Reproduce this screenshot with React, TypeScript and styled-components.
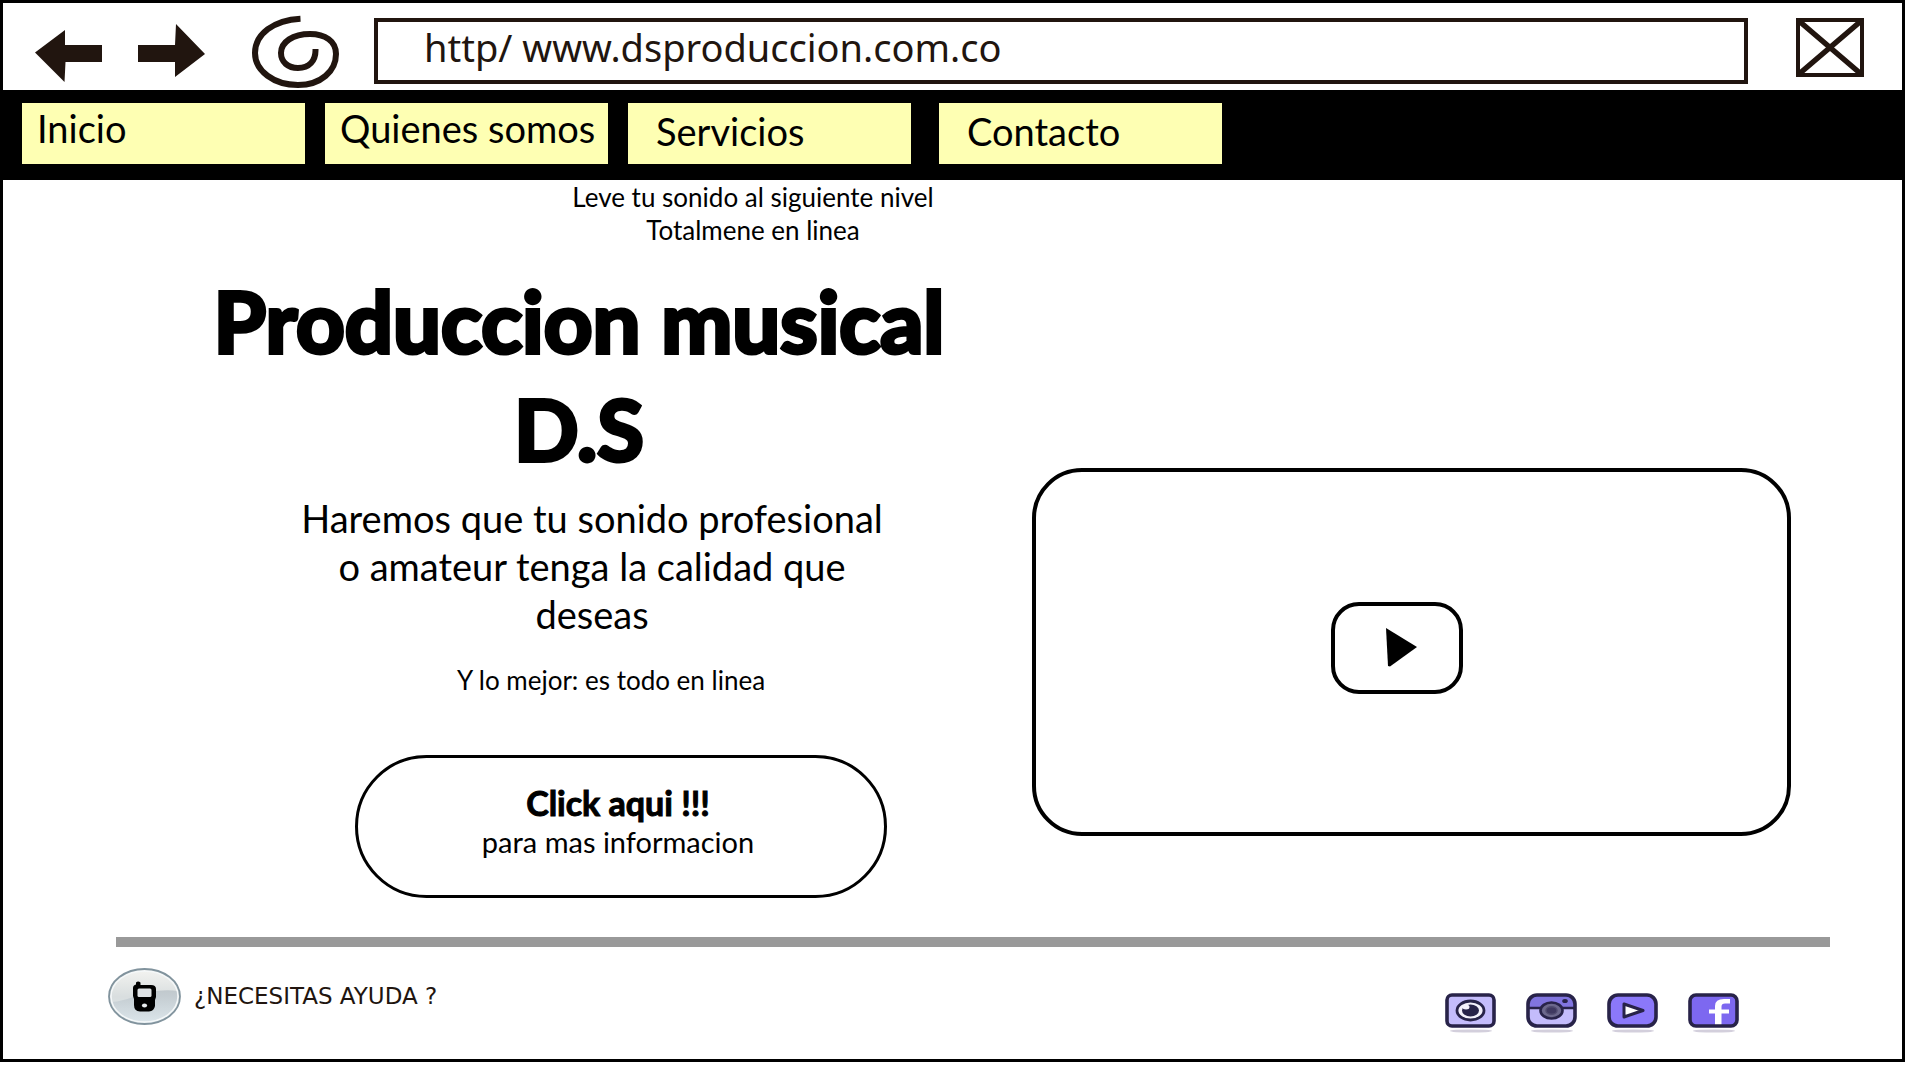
import React from "react";
import styled, { createGlobalStyle } from "styled-components";

const INK = "#21150f";
const FONT = `Lato, "Noto Sans", sans-serif`;
const WIDE_FONT = `"Noto Sans", "Open Sans", sans-serif`;

const GlobalStyle = createGlobalStyle`
  *, *::before, *::after { box-sizing: border-box; }
  body { margin: 0; background: #fff; color: #000; font-family: ${FONT}; }
`;

const Page = styled.div`
  border: 3px solid #000;
  background: #fff;
`;

const BrowserBar = styled.header`
  display: flex;
  align-items: flex-start;
  height: 87px;
  padding: 15px 38px 0 32px;
`;

const IconButton = styled.button<{ $gap: number }>`
  flex: none;
  display: flex;
  margin: 0 ${(p) => p.$gap}px 0 0;
  padding: 0;
  border: 0;
  background: none;
  color: ${INK};
  cursor: pointer;

  svg {
    display: block;
    overflow: visible;
  }
`;

const Address = styled.input`
  flex: 1;
  min-width: 0;
  height: 66px;
  margin-right: 48px;
  padding: 0 46px 8px;
  border: 4px solid ${INK};
  border-radius: 0;
  outline: 0;
  background: #fff;
  color: ${INK};
  font: 38px/48px ${WIDE_FONT};
`;

const Nav = styled.nav`
  display: flex;
  gap: 20px;
  height: 90px;
  padding: 13px 19px 16px;
  background: #000;
`;

const Tab = styled.a<{ $roomy?: boolean }>`
  flex: 0 1 283px;
  padding: ${(p) => (p.$roomy ? "4px 0 0 28px" : "1px 0 0 15px")};
  background: #feffb3;
  color: #000;
  font-size: 38px;
  line-height: 48px;
  text-decoration: none;
  white-space: nowrap;

  &:last-child {
    margin-left: 8px;
  }
`;

const Hero = styled.main`
  display: grid;
  grid-template-columns: minmax(0, 1029fr) minmax(0, 870fr);
  align-items: start;
`;

const Pitch = styled.section`
  display: flex;
  flex-direction: column;
  align-items: flex-start;
`;

const SmallText = styled.p<{ $top: number; $left: number; $width: number }>`
  width: ${(p) => p.$width}px;
  margin: ${(p) => p.$top}px 0 0 ${(p) => p.$left}px;
  font-size: 26px;
  line-height: 33px;
  text-align: center;
  white-space: nowrap;
`;

const Title = styled.h1`
  width: 760px;
  margin: 19px 0 0 196px;
  font-size: 85px;
  font-weight: 700;
  line-height: 108px;
  text-align: center;
  white-space: nowrap;
  -webkit-text-stroke: 4px #000;
`;

const Lead = styled.p`
  width: 600px;
  margin: 12px 0 0 289px;
  font-size: 38px;
  line-height: 48px;
  text-align: center;
  white-space: nowrap;
`;

const CallToAction = styled.button`
  display: flex;
  flex-direction: column;
  align-items: center;
  justify-content: center;
  width: 532px;
  height: 143px;
  margin: 58px 0 0 352px;
  padding: 0 6px 14px 0;
  border: 3px solid #000;
  border-radius: 72px;
  background: #fff;
  color: #000;
  font: 29px/33px ${FONT};
  cursor: pointer;

  strong {
    font-size: 34px;
    font-weight: 700;
    line-height: 44px;
    -webkit-text-stroke: 1px #000;
  }
`;

const Video = styled.section`
  display: flex;
  align-items: center;
  justify-content: center;
  height: 368px;
  margin: 288px 111px 0 0;
  padding: 0 30px 8px 0;
  border: 4px solid #000;
  border-radius: 50px;
`;

const PlayButton = styled.button`
  display: flex;
  align-items: center;
  justify-content: center;
  width: 132px;
  height: 92px;
  padding: 0 0 0 10px;
  border: 4px solid #000;
  border-radius: 28px;
  background: #fff;
  cursor: pointer;
`;

const Divider = styled.hr`
  height: 10px;
  margin: 39px 72px 0 113px;
  border: 0;
  background: #999;
`;

const Footer = styled.footer`
  display: flex;
  align-items: flex-start;
  justify-content: space-between;
  padding: 21px 163px 26px 105px;
`;

const Help = styled.a`
  display: flex;
  align-items: center;
  gap: 13px;
  color: ${INK};
  font: 23px/57px "DejaVu Sans", sans-serif;
  text-decoration: none;
`;

const Social = styled.div`
  display: flex;
  gap: 30px;
  padding-top: 25px;

  a,
  svg {
    display: block;
  }
`;

const NAVY = "#282349";

function Badge({ label, fill, rx, children }: { label: string; fill: string; rx: number; children: React.ReactNode }) {
  return (
    <a href="#" aria-label={label}>
      <svg width="51" height="40" viewBox="0 0 51 40">
        <ellipse cx="26" cy="38" rx="21" ry="1.600" fill="#d3cfdc" />
        <rect x="2" y="2" width="47" height="31" rx={rx} fill={fill} />
        {children}
        <rect x="2" y="2" width="47" height="31" rx={rx} fill="none" stroke={NAVY} strokeWidth="3.6" />
      </svg>
    </a>
  );
}

export default function App() {
  return (
    <>
      <GlobalStyle />
      <Page>
        <BrowserBar>
          <IconButton $gap={36} aria-label="Atrás">
            <svg width="67" height="70" viewBox="35 18 67 70" fill="currentColor">
              <path d="M35 52.500L65 30V45H102V62H65.500L64.500 82Z" />
            </svg>
          </IconButton>
          <IconButton $gap={47} aria-label="Adelante">
            <svg width="67" height="70" viewBox="138 18 67 70" fill="currentColor">
              <path d="M138 45H175L176 24L205 54L175 77V62H138Z" />
            </svg>
          </IconButton>
          <IconButton $gap={34} aria-label="Recargar">
            <svg width="88" height="70" viewBox="252 18 88 70" fill="none" stroke="currentColor" strokeWidth="6">
              <path d="M300.500 18.700C274 20 255 34 255 53C255 71 274 85 298 85C321 85 336 71 336 54C336 41 325 34 310 34C293 34 281 42 281 53C281 62 288 68 298 68C309 68 316 61 315.500 49" />
            </svg>
          </IconButton>
          <Address aria-label="Dirección" defaultValue="http/ www.dsproduccion.com.co" />
          <IconButton $gap={0} aria-label="Cerrar">
            <svg width="68" height="59" viewBox="0 0 68 59" fill="none" stroke="currentColor" strokeWidth="4">
              <rect x="2" y="2" width="64" height="55" />
              <path d="M3 3L65 56M65 3L3 56" strokeWidth="5.500" />
            </svg>
          </IconButton>
        </BrowserBar>

        <Nav>
          <Tab href="#">Inicio</Tab>
          <Tab href="#">Quienes somos</Tab>
          <Tab href="#" $roomy>Servicios</Tab>
          <Tab href="#" $roomy>Contacto</Tab>
        </Nav>

        <Hero>
          <Pitch>
            <SmallText $top={1} $left={550} $width={400}>
              Leve tu sonido al siguiente nivel
              <br />
              Totalmene en linea
            </SmallText>
            <Title>
              Produccion musical
              <br />
              D.S
            </Title>
            <Lead>
              Haremos que tu sonido profesional
              <br />
              o amateur tenga la calidad que
              <br />
              deseas
            </Lead>
            <SmallText $top={26} $left={408} $width={400}>
              Y lo mejor: es todo en linea
            </SmallText>
            <CallToAction>
              <strong>Click aqui !!!</strong>
              para mas informacion
            </CallToAction>
          </Pitch>
          <Video>
            <PlayButton aria-label="Reproducir">
              <svg width="32" height="40" viewBox="0 0 32 40">
                <path d="M0 0L31 19L4 38.500L2 38Z" />
              </svg>
            </PlayButton>
          </Video>
        </Hero>

        <Divider />

        <Footer>
          <Help href="#">
            <svg width="73" height="57" viewBox="0 0 73 57" aria-hidden="true">
              <defs>
                <linearGradient id="shell" x1="0" y1="0" x2="0" y2="1">
                  <stop offset="0" stopColor="#f4f4f1" />
                  <stop offset="0.5" stopColor="#d9dedf" />
                  <stop offset="1" stopColor="#dbe5ea" />
                </linearGradient>
                <linearGradient id="shade" x1="0" y1="0" x2="0" y2="1">
                  <stop offset="0" stopColor="#b9c2c8" />
                  <stop offset="1" stopColor="#dbe5ea" />
                </linearGradient>
              </defs>
              <ellipse cx="36.500" cy="28.500" rx="35.500" ry="27.500" fill="url(#shell)" />
              <path d="M3 34C22 34 38 19 70 23C71 43 55 54 36.500 54C19 54 6 46 3 34Z" fill="url(#shade)" opacity="0.8" />
              <ellipse cx="36.500" cy="28.500" rx="33.500" ry="25.500" fill="none" stroke="#f5f8f9" strokeWidth="1.500" />
              <ellipse cx="36.500" cy="28.500" rx="35.500" ry="27.500" fill="none" stroke="#81939d" strokeWidth="1.800" />
              <path d="M28 14.500Q30 12.500 32.500 14.500V17H43Q48 17 48 21V29L47 32V38Q46 43 41 43.500H32Q26 43 26 37V31L25 28V20Q25 17 28 16.500Z" />
              <rect x="29.500" y="20.500" width="14" height="8.500" rx="1.500" fill="#dfe3e5" />
              <ellipse cx="36.500" cy="37.500" rx="2.600" ry="2" fill="#e8ecee" />
            </svg>
            ¿NECESITAS AYUDA ?
          </Help>
          <Social>
            <Badge label="Cámara" fill="#c4bcfb" rx={5}>
              <ellipse cx="25.500" cy="17.500" rx="13.500" ry="9.500" fill="#f4f1fb" stroke={NAVY} strokeWidth="2.800" />
              <ellipse cx="25.500" cy="17.500" rx="8.500" ry="6" fill={NAVY} />
              <ellipse cx="21" cy="14" rx="3.500" ry="2.500" fill="#f4f1fb" />
            </Badge>
            <Badge label="Instagram" fill="#c4bcfb" rx={9}>
              <path d="M2 15V11Q2 2 11 2H40Q49 2 49 11V15Z" fill="#8175e0" />
              <path d="M2 15H49" stroke={NAVY} strokeWidth="2.400" />
              <ellipse cx="25.500" cy="17.500" rx="11" ry="8" fill="#6c688c" stroke={NAVY} strokeWidth="2.600" />
              <ellipse cx="25.500" cy="17.500" rx="5.500" ry="3.800" fill="#3f3960" stroke="#514c70" strokeWidth="1.500" />
              <ellipse cx="39" cy="8" rx="2.800" ry="2" fill={NAVY} />
            </Badge>
            <Badge label="YouTube" fill="#8b78fa" rx={9}>
              <path d="M17 11V24L36 17.500Z" fill="#fff" stroke={NAVY} strokeWidth="3" strokeLinejoin="round" />
            </Badge>
            <Badge label="Facebook" fill="#7d68f0" rx={6}>
              <path d="M27 33V20.500H21V16.500H27V13Q27 6 36 6H42V10.500H37Q33.500 10.500 33.500 13.500V16.500H41V20.500H33.500V33Z" fill="#fff" />
            </Badge>
          </Social>
        </Footer>
      </Page>
    </>
  );
}
